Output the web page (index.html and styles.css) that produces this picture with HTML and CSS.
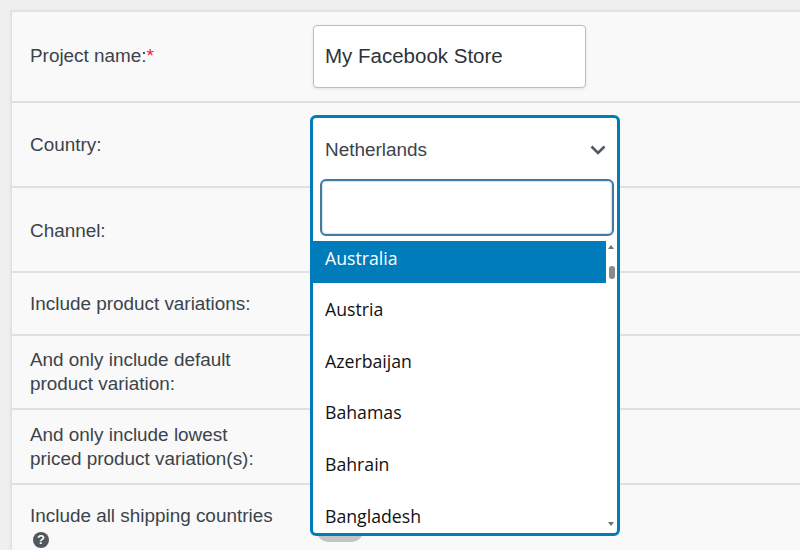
FILE: index.html
```html
<!DOCTYPE html>
<html lang="en">
<head>
<meta charset="utf-8">
<title>Project</title>
<link rel="stylesheet" href="styles.css">
</head>
<body>
<main class="card">
  <div class="row row-name">
    <div class="label">Project name:<span class="req">*</span></div>
    <div class="field"><input class="text-input" type="text" value="My Facebook Store"></div>
  </div>
  <div class="row row-country"><div class="label">Country:</div></div>
  <div class="row row-channel"><div class="label">Channel:</div></div>
  <div class="row row-var"><div class="label">Include product variations:</div></div>
  <div class="row row-default"><div class="label">And only include default<br>product variation:</div></div>
  <div class="row row-lowest"><div class="label">And only include lowest<br>priced product variation(s):</div></div>
  <div class="row row-ship">
    <div class="label">Include all shipping countries<br><span class="help">?</span></div>
    <div class="field"><span class="toggle"></span></div>
  </div>
  <div class="dropdown">
    <div class="selected"><span>Netherlands</span>
      <svg class="chev" width="16" height="10" viewBox="0 0 16 10"><path d="M1.5 1.5 8 8l6.5-6.5" fill="none" stroke="#50575e" stroke-width="2.6"/></svg>
    </div>
    <div class="search-wrap"><input class="search" type="text"></div>
    <div class="list">
      <ul class="options">
        <li class="active">Australia</li>
        <li>Austria</li>
        <li>Azerbaijan</li>
        <li>Bahamas</li>
        <li>Bahrain</li>
        <li>Bangladesh</li>
      </ul>
      <div class="scrollbar">
        <span class="arrow-up"></span>
        <span class="thumb"></span>
        <span class="arrow-down"></span>
      </div>
    </div>
  </div>
</main>
</body>
</html>
```

FILE: styles.css
```css
html, body {
  margin: 0;
  height: 550px;
  overflow: hidden;
  background: #f0f0f1;
}
body {
  padding: 10px 0 0 11px;
  box-sizing: border-box;
  font-family: "Liberation Sans", Arial, sans-serif;
  color: #3c434a;
}
.card {
  position: relative;
  width: 800px;
  height: 560px;
  box-sizing: border-box;
  background: #f9f9f9;
  border-top: 2px solid #e2e2e2;
  border-left: 1px solid #dedede;
  box-shadow: -1px 0 3px rgba(0, 0, 0, 0.05);
}
.row {
  display: flex;
  align-items: center;
  box-sizing: border-box;
  border-bottom: 2px solid #e0e0e0;
  padding-left: 18px;
}
.row-name { height: 91px; padding-bottom: 1px; }
.row-country { height: 85px; }
.row-channel { height: 85px; padding-top: 2px; }
.row-var { height: 63px; }
.row-default { height: 74px; }
.row-lowest { height: 75px; }
.row-ship { height: 90px; border-bottom: 0; align-items: flex-start; padding-top: 19px; }
.label {
  width: 283px;
  flex: none;
  font-size: 18.9px;
  line-height: 24px;
}
.row-name .label { margin-bottom: 1px; }
.req { color: #f01d1d; }
.text-input {
  display: block;
  width: 273px;
  height: 63px;
  box-sizing: border-box;
  margin: 0;
  padding: 0 11px;
  border: 1px solid #bdbdbd;
  border-radius: 4px;
  background: #fff;
  font: 20.5px "Liberation Sans", Arial, sans-serif;
  color: #2c3338;
  box-shadow: 0 1px 3px rgba(0, 0, 0, 0.1);
  outline: 0;
}
.help {
  display: inline-flex;
  align-items: center;
  justify-content: center;
  width: 16px;
  height: 16px;
  margin: 4px 0 0 3px;
  border-radius: 50%;
  background: #50575e;
  color: #f9f9f9;
  font-size: 13px;
  font-weight: bold;
  line-height: 16px;
  vertical-align: top;
}
.toggle {
  display: block;
  width: 48px;
  height: 26px;
  margin: 12px 0 0 3px;
  border-radius: 13px;
  background: #c4c4c4;
}
.dropdown {
  position: absolute;
  left: 298px;
  top: 103px;
  width: 310px;
  height: 421px;
  box-sizing: border-box;
  background: #fff;
  border: 3px solid #007cba;
  border-radius: 6px;
  display: flex;
  flex-direction: column;
  overflow: hidden;
}
.selected {
  flex: none;
  height: 61px;
  box-sizing: border-box;
  display: flex;
  align-items: center;
  justify-content: space-between;
  padding: 6px 11px 4px 12px;
  font-size: 18.9px;
}
.chev { margin-top: 1px; }
.search-wrap {
  flex: none;
  height: 62px;
  box-sizing: border-box;
  padding: 0 3px 0 7px;
}
.search {
  display: block;
  width: 100%;
  height: 57px;
  box-sizing: border-box;
  border: 2px solid #3f7ca3;
  border-radius: 6px;
  background: #fff;
  box-shadow: inset 0 0 2px rgba(0, 0, 0, 0.4);
  outline: 0;
}
.list {
  flex: 1;
  min-height: 0;
  display: flex;
  position: relative;
  overflow: hidden;
}
.options {
  flex: 1;
  margin: 0;
  padding: 0;
  list-style: none;
  font-family: "Open Sans", sans-serif;
  font-size: 17.7px;
  color: #111;
}
.options li {
  height: 51.7px;
  box-sizing: border-box;
  padding: 10px 0 0 12px;
  line-height: 33px;
}
.options li.active {
  height: 42px;
  padding-top: 0;
  line-height: 34px;
  background: #007cba;
  color: #fff;
}
.scrollbar {
  flex: none;
  width: 11px;
  position: relative;
}
.arrow-up, .arrow-down {
  position: absolute;
  left: 2px;
  width: 0;
  height: 0;
  border-left: 3px solid transparent;
  border-right: 3px solid transparent;
}
.arrow-up { top: 4px; border-bottom: 4px solid #707070; }
.arrow-down { bottom: 7px; border-top: 4px solid #707070; }
.thumb {
  position: absolute;
  left: 3px;
  top: 25px;
  width: 6px;
  height: 13px;
  border-radius: 3px;
  background: #8a8a8a;
}
```
